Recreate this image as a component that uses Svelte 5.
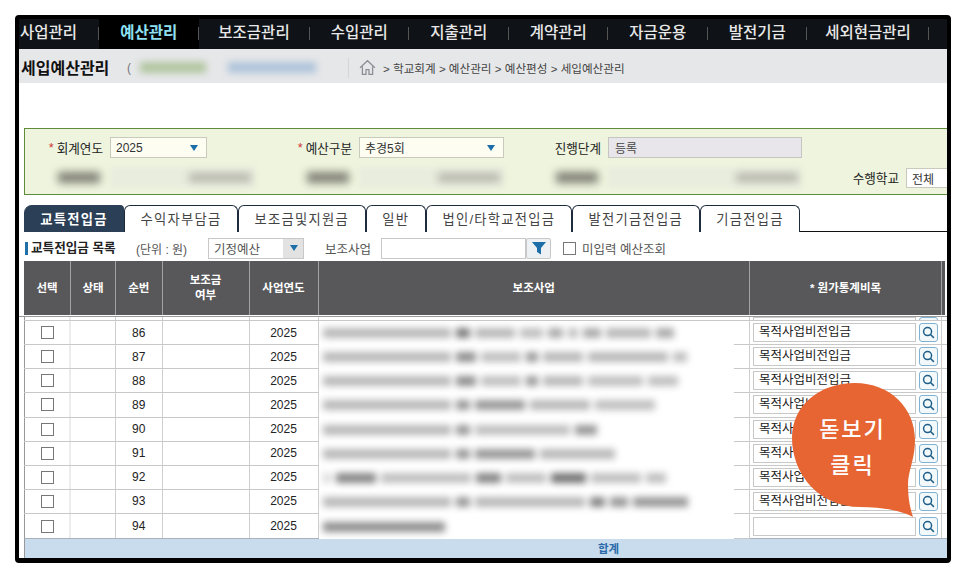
<script>
  const menus = ["사업관리", "예산관리", "보조금관리", "수입관리", "지출관리", "계약관리", "자금운용", "발전기금", "세외현금관리"];
  const tabs = ["교특전입금", "수익자부담금", "보조금및지원금", "일반", "법인/타학교전입금", "발전기금전입금", "기금전입금"];

  // blurred (masked) business names: [width, darkness] per word
  const head = [128, 0.38];
  const rows = [
    { no: 86, code: "목적사업비전입금", words: [head, [14, 0.7], [40, 0.38], [23, 0.34], [15, 0.45], [10, 0.34], [18, 0.45], [45, 0.38], [18, 0.45]] },
    { no: 87, code: "목적사업비전입금", words: [head, [20, 0.6], [40, 0.34], [12, 0.55], [40, 0.38], [80, 0.38], [14, 0.34]] },
    { no: 88, code: "목적사업비전입금", words: [head, [20, 0.6], [40, 0.34], [12, 0.55], [40, 0.38], [55, 0.34], [30, 0.34]] },
    { no: 89, code: "목적사업비전입금", words: [head, [14, 0.55], [50, 0.55], [60, 0.38], [60, 0.34]] },
    { no: 90, code: "목적사업비전입금", words: [head, [14, 0.55], [95, 0.34], [22, 0.55]] },
    { no: 91, code: "목적사업비전입금", words: [head, [14, 0.55], [60, 0.55], [75, 0.38]] },
    { no: 92, code: "목적사업비전입금", words: [[8, 0.2], [40, 0.65], [90, 0.34], [25, 0.65], [40, 0.34], [35, 0.75], [50, 0.34], [20, 0.34]] },
    { no: 93, code: "목적사업비전입금", words: [head, [14, 0.55], [110, 0.38], [15, 0.65], [18, 0.55], [55, 0.55]] },
    { no: 94, code: "", words: [[122, 0.6]] }
  ];
</script>

<div class="frame">
  <nav class="menu">
    {#each menus as m, i}
      <div class="menu-item" class:first={i === 0} class:active={i === 1} class:mid={i === 2} class:wide={i === 8}>{m}</div>
    {/each}
  </nav>

  <div class="subbar">
    <h1>세입예산관리</h1>
    <span class="paren">(</span>
    <span class="mask green"></span>
    <span class="mask blue"></span>
    <span class="sep"></span>
    <svg class="home" viewBox="0 0 16 16" width="17" height="17" fill="none" stroke="#8c9096" stroke-width="1.2">
      <path d="M1 8.2 8 1.6l7 6.6M3.2 7v7.4h3.4V10h2.8v4.4h3.4V7" />
    </svg>
    <span class="crumbs">&gt; 학교회계 &gt; 예산관리 &gt; 예산편성 &gt; 세입예산관리</span>
  </div>

  <section class="filter">
    <label class="lbl"><i>*</i> 회계연도</label>
    <div class="sel">2025<span class="arrow"></span></div>
    <label class="lbl"><i>*</i> 예산구분</label>
    <div class="sel">추경5회<span class="arrow"></span></div>
    <label class="lbl">진행단계</label>
    <div class="readonly">등록</div>
    <span></span>
    <span></span>

    <div class="lbl"><span class="mask name"></span></div>
    <div class="maskfield"><span class="mask val"></span></div>
    <div class="lbl"><span class="mask name"></span></div>
    <div class="maskfield"><span class="mask val"></span></div>
    <div class="lbl"><span class="mask name"></span></div>
    <div class="maskfield wide"><span class="mask val"></span></div>
    <label class="lbl school">수행학교</label>
    <div class="sel school-sel">전체</div>
  </section>

  <div class="tabs">
    {#each tabs as t, i}
      <div class="tab" class:on={i === 0}>{t}</div>
    {/each}
  </div>

  <div class="tools">
    <h2>교특전입금 목록</h2>
    <span class="unit">(단위 : 원)</span>
    <div class="combo">기정예산<span class="combo-btn"><span class="arrow"></span></span></div>
    <span class="tool-lbl">보조사업</span>
    <div class="text-in"></div>
    <button class="filter-btn" aria-label="필터">
      <svg viewBox="0 0 16 16" width="16" height="16"><path d="M1 2h14L10 8v6.5L6 12V8z" fill="#1b6ea8" /></svg>
    </button>
    <span class="check big"></span>
    <span class="tool-lbl">미입력 예산조회</span>
  </div>

  <div class="thead">
    <div>선택</div>
    <div>상태</div>
    <div>순번</div>
    <div>보조금<br />여부</div>
    <div>사업연도</div>
    <div>보조사업</div>
    <div>* 원가통계비목</div>
    <div></div>
  </div>

  <div class="tbody">
    <div class="row cut">
      <div></div><div></div><div></div><div></div><div></div><div class="name-cell"></div>
      <div class="code-cell"><span class="code"></span><span class="find"></span></div>
      <div></div>
    </div>
    {#each rows as r}
      <div class="row">
        <div class="center"><span class="check"></span></div>
        <div></div>
        <div class="center">{r.no}</div>
        <div></div>
        <div class="center">2025</div>
        <div class="name-cell">
          <div class="words">
            {#each r.words as w}
              <span style="width:{w[0]}px;opacity:{w[1]}"></span>
            {/each}
          </div>
        </div>
        <div class="code-cell">
          <span class="code">{r.code}</span>
          <button class="find" aria-label="검색">
            <svg viewBox="0 0 14 14" width="13" height="13" fill="none" stroke="#1d5f88" stroke-width="1.6">
              <circle cx="6" cy="6" r="4.3" /><path d="M9.2 9.2 12.8 12.8" />
            </svg>
          </button>
        </div>
        <div></div>
      </div>
    {/each}
  </div>

  <div class="total">합계</div>

  <div class="bubble">
    <svg viewBox="0 0 128 140" width="128" height="140">
      <path d="M65 3C100 3 125 28 125 60C125 80 118 90 118 105C118 118 120 128 123 137C110 130 90 127 70 127C30 127 2 95 2 58C2 25 30 3 65 3Z" fill="#e66533" />
    </svg>
    <div class="bubble-text">돋보기<br />클릭</div>
  </div>
</div>

<style>
  :global(body) {
    background: #fff;
    font-family: "Liberation Sans", "Noto Sans CJK KR", sans-serif;
  }
  .frame {
    position: relative;
    box-sizing: border-box;
    width: 936px;
    height: 548px;
    margin: 15px 0 0 15px;
    border: 4px solid #000;
    border-bottom-width: 5px;
    border-radius: 4px;
    overflow: hidden;
    background: #fff;
    color: #222;
  }

  .menu {
    display: flex;
    height: 30px;
    background: #0f1216;
    color: #e8e8e8;
    font-size: 15.5px;
    font-weight: 500;
    line-height: 28px;
  }
  .menu-item {
    position: relative;
    width: 99.5px;
    text-align: center;
  }
  .menu-item::after {
    content: "";
    position: absolute;
    right: 0;
    top: 8px;
    height: 13px;
    border-right: 1px solid #555;
  }
  .menu-item.first {
    width: 80px;
    text-align: left;
    padding-left: 1px;
    box-sizing: border-box;
  }
  .menu-item.active {
    background: #000;
    color: #8fe0f2;
    font-weight: 700;
  }
  .menu-item.mid {
    width: 111px;
  }
  .menu-item.wide {
    width: 122px;
  }

  .subbar {
    display: flex;
    align-items: center;
    box-sizing: border-box;
    height: 34px;
    padding-top: 3px;
    background: #e6e7e9;
  }
  .subbar h1 {
    margin: -1px 0 0 2px;
    width: 106px;
    font-size: 16px;
    font-weight: 700;
    color: #111;
    white-space: nowrap;
  }
  .paren {
    width: 13px;
    font-size: 12px;
    color: #777;
  }
  .mask {
    display: block;
    filter: blur(3.5px);
    background: #999;
  }
  .mask.green {
    width: 66px;
    height: 11px;
    background: #b2c6a0;
  }
  .mask.blue {
    width: 88px;
    height: 11px;
    margin-left: 22px;
    background: #aec4da;
  }
  .sep {
    height: 20px;
    margin-left: 32px;
    border-left: 1px solid #d4d5d7;
  }
  .home {
    margin-left: 10px;
  }
  .crumbs {
    margin-left: 7px;
    font-size: 11.6px;
    color: #444;
    white-space: nowrap;
  }

  .filter {
    display: grid;
    grid-template-columns: 85px 97px 152px 145px 104px 194px 104px 41px;
    grid-template-rows: 21px 21px;
    row-gap: 9px;
    box-sizing: border-box;
    height: 67px;
    margin: 45px 0 0 5px;
    padding-top: 8px;
    background: #eef4de;
    border: 1px solid #5f8c3a;
    border-right: 0;
    font-size: 12.6px;
    overflow: hidden;
  }
  .lbl {
    display: flex;
    align-items: center;
    justify-content: flex-end;
    padding-right: 7px;
    color: #222;
    white-space: nowrap;
  }
  .lbl i {
    font-style: normal;
    color: #d0343a;
    margin-right: 3px;
  }
  .lbl .mask.name {
    width: 42px;
    height: 11px;
    margin-right: 3px;
    filter: blur(4px);
    background: #7f7f74;
  }
  .sel {
    position: relative;
    box-sizing: border-box;
    display: flex;
    align-items: center;
    padding-left: 5px;
    background: #fdfdf2;
    border: 1px solid #c9cabb;
    color: #333;
    font-size: 12px;
  }
  .arrow {
    position: absolute;
    right: 8px;
    top: 7px;
    width: 0;
    height: 0;
    border-left: 4.5px solid transparent;
    border-right: 4.5px solid transparent;
    border-top: 6px solid #1b6ea8;
  }
  .readonly {
    display: flex;
    align-items: center;
    padding-left: 6px;
    background: #e8e6ea;
    border: 1px solid #c6c6c0;
    box-sizing: border-box;
    font-size: 12px;
    color: #444;
  }
  .maskfield {
    width: 145px;
    display: flex;
    align-items: center;
    justify-content: flex-end;
    padding-right: 4px;
    box-sizing: border-box;
    background: #e9edde;
    filter: blur(2px);
  }
  .maskfield.wide {
    width: 194px;
  }
  .mask.val {
    width: 62px;
    height: 9px;
    background: #b4b6aa;
  }
  .lbl.school {
    padding-right: 7px;
  }
  .sel.school-sel {
    background: #fff;
    border-right: 0;
    margin-top: 1px;
  }

  .tabs {
    display: flex;
    box-sizing: border-box;
    height: 27px;
    margin: 10px 0 0 5px;
    border-bottom: 1px solid #111;
  }
  .tab {
    padding: 0 15.6px;
    height: 26px;
    line-height: 27px;
    background: #fff;
    border: 1px solid #1d2b3c;
    border-bottom: 0;
    border-radius: 6px 6px 0 0;
    font-size: 13.3px;
    letter-spacing: 1.26px;
    color: #444;
    white-space: nowrap;
  }
  .tab.on {
    padding: 0 15.2px;
    background: #2b3f56;
    border-color: #2b3f56;
    border-radius: 8px 4px 0 0;
    color: #fff;
    font-weight: 700;
  }

  .tools {
    display: flex;
    align-items: center;
    height: 26px;
    margin: 1px 0 0 6px;
    font-size: 12.5px;
    color: #555;
    white-space: nowrap;
  }
  .tools h2 {
    margin: 4px 0 0;
    padding-left: 3px;
    width: 111px;
    box-sizing: border-box;
    border-left: 3px solid #1f6fa8;
    font-size: 12.6px;
    line-height: 13px;
    font-weight: 700;
    color: #222;
  }
  .unit {
    margin-top: 4px;
    width: 72px;
    font-size: 12px;
  }
  .combo {
    position: relative;
    display: flex;
    align-items: center;
    box-sizing: border-box;
    width: 96px;
    height: 21px;
    margin-top: 4px;
    padding-left: 5px;
    border: 1px solid #c8c8c8;
    font-size: 12.5px;
  }
  .combo-btn {
    position: absolute;
    right: 0;
    top: 0;
    bottom: 0;
    width: 20px;
    background: #e2e2e2;
  }
  .combo-btn .arrow {
    right: 5px;
    top: 6px;
  }
  .tool-lbl {
    margin: 4px 0 0 21px;
  }
  .text-in {
    box-sizing: border-box;
    width: 145px;
    height: 21px;
    margin: 4px 0 0 10px;
    border: 1px solid #c8c8c8;
  }
  .filter-btn {
    display: flex;
    align-items: center;
    justify-content: center;
    box-sizing: border-box;
    width: 25px;
    height: 21px;
    margin-top: 4px;
    padding: 0;
    border: 1px solid #c8c8c8;
    border-radius: 2px;
    background: #eef1f3;
  }
  .check {
    display: block;
    box-sizing: border-box;
    width: 13px;
    height: 13px;
    background: #fff;
    border: 1px solid #777;
  }
  .check.big {
    margin: 4px -9px 0 12px;
  }
  .tools .check + .tool-lbl {
    margin-left: 15px;
  }

  .thead,
  .row {
    display: grid;
    grid-template-columns: 47px 45px 46.5px 87px 69px 431.5px 192px 5px;
    margin-left: 5px;
  }
  .thead {
    height: 54px;
    margin-top: 2px;
    background: linear-gradient(to left, #fff 2px, #58585a 2px);
    color: #fff;
    font-size: 11.5px;
    font-weight: 700;
    line-height: 15px;
    text-align: center;
  }
  .thead > div {
    display: flex;
    align-items: center;
    justify-content: center;
    box-sizing: border-box;
    border-right: 1px solid #a2a2a4;
  }
  .thead > div:last-child {
    border: 0;
  }

  .tbody {
    margin-top: 1px;
    border-top: 1px solid #999;
  }
  .row {
    height: 24.125px;
    font-size: 12px;
    color: #222;
    box-sizing: border-box;
    border-bottom: 1px solid #c8c8c8;
  }
  .row:last-child {
    border-bottom: 0;
  }
  .row > div {
    box-sizing: border-box;
    border-right: 1px solid #cfcfcf;
  }
  .row > div:first-child {
    border-left: 1px solid #999;
    border-right: 2px solid #ececec;
  }
  .row > div:last-child {
    border-right: 0;
  }
  .center {
    display: flex;
    align-items: center;
    justify-content: center;
  }
  .row.cut {
    height: 4px;
    overflow: hidden;
  }
  .name-cell {
    position: relative;
    background: #fff;
    margin-bottom: -1px;
    overflow: hidden;
  }
  .name-cell::after {
    content: "";
    position: absolute;
    right: 0;
    bottom: 0;
    width: 15px;
    border-bottom: 1px solid #c8c8c8;
  }
  .words {
    display: flex;
    gap: 5px;
    align-items: center;
    height: 100%;
    padding-left: 4px;
    filter: blur(3.5px);
  }
  .words span {
    flex: none;
    height: 10px;
    background: #444;
  }
  .code-cell {
    display: flex;
    align-items: center;
    gap: 3px;
    padding: 0 0 0 3px;
  }
  .row.cut .code-cell {
    align-items: flex-end;
    padding-bottom: 2px;
  }
  .code {
    display: block;
    box-sizing: border-box;
    width: 163px;
    height: 19px;
    padding-left: 5px;
    border: 1px solid #c8c8c8;
    font-size: 12.5px;
    line-height: 17px;
    color: #222;
    white-space: nowrap;
  }
  .find {
    display: flex;
    align-items: center;
    justify-content: center;
    box-sizing: border-box;
    width: 19px;
    height: 19px;
    padding: 0;
    background: #f3f8fb;
    border: 1px solid #7fb2d2;
    border-radius: 3px;
  }

  .total {
    box-sizing: border-box;
    height: 20px;
    margin: 0 0 0 5px;
    padding-left: 245px;
    background: #c8dcee;
    border-top: 1px solid #a9b2ba;
    border-left: 1px solid #999;
    color: #2a6aa8;
    font-size: 11.5px;
    font-weight: 700;
    line-height: 21px;
    text-align: center;
  }

  .bubble {
    position: absolute;
    left: 771px;
    top: 361px;
    width: 128px;
    height: 140px;
  }
  .bubble svg {
    display: block;
  }
  .bubble-text {
    position: absolute;
    left: 0;
    top: 29px;
    width: 128px;
    padding-right: 3px;
    box-sizing: border-box;
    color: #fff;
    font-family: "Noto Sans CJK KR", sans-serif;
    font-size: 22px;
    font-weight: 500;
    letter-spacing: 2px;
    line-height: 36px;
    text-align: center;
  }
</style>
